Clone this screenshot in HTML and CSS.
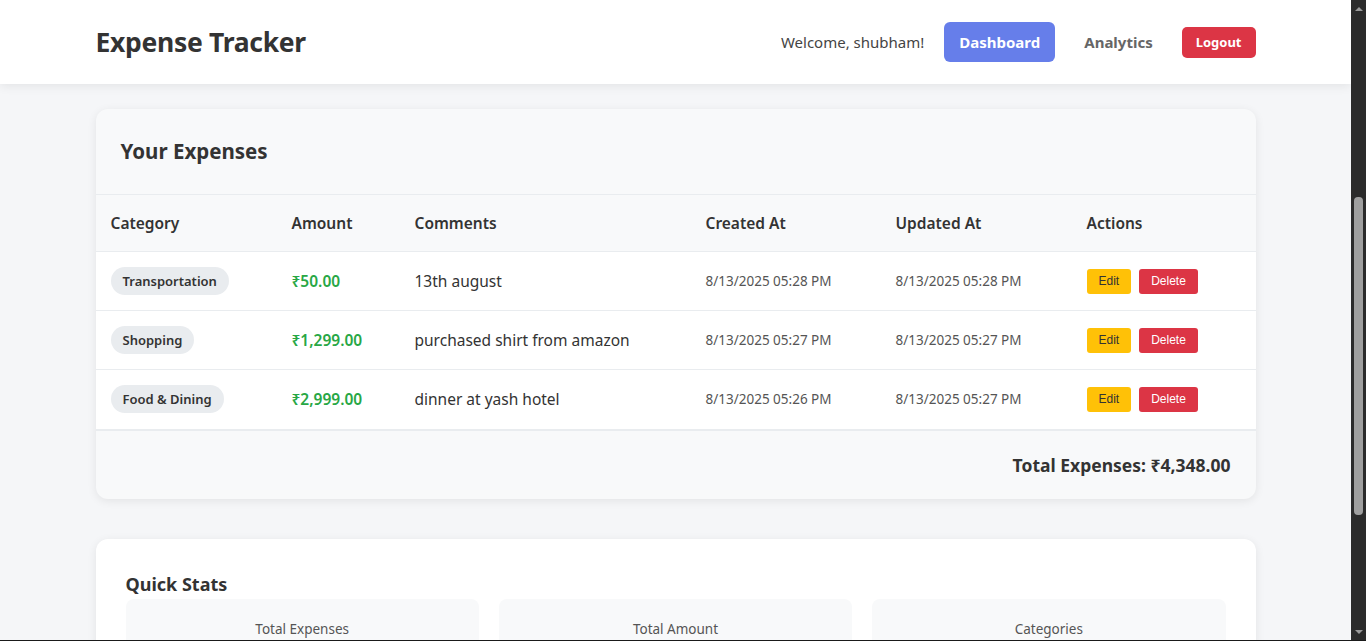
FILE: index.html
```html
<!DOCTYPE html>
<html lang="en">
<head>
<meta charset="utf-8">
<title>Expense Tracker</title>
<link rel="stylesheet" href="styles.css">
</head>
<body>
<div class="screen">
  <div class="viewport">
    <header class="topbar">
      <div class="container nav">
        <h1 class="brand">Expense Tracker</h1>
        <div class="nav-links">
          <span class="welcome">Welcome, shubham!</span>
          <a class="nav-link active">Dashboard</a>
          <a class="nav-link">Analytics</a>
          <button class="logout">Logout</button>
        </div>
      </div>
    </header>
    <main class="container content">
      <section class="card expenses">
        <div class="card-head"><h2>Your Expenses</h2></div>
        <table class="table">
          <thead>
            <tr>
              <th class="c-cat">Category</th>
              <th class="c-amt">Amount</th>
              <th class="c-com">Comments</th>
              <th class="c-cr">Created At</th>
              <th class="c-up">Updated At</th>
              <th class="c-act">Actions</th>
            </tr>
          </thead>
          <tbody>
            <tr>
              <td><span class="badge">Transportation</span></td>
              <td class="amount">₹50.00</td>
              <td class="comment">13th august</td>
              <td class="date">8/13/2025 05:28 PM</td>
              <td class="date">8/13/2025 05:28 PM</td>
              <td><div class="actions"><button class="btn edit">Edit</button><button class="btn del">Delete</button></div></td>
            </tr>
            <tr>
              <td><span class="badge">Shopping</span></td>
              <td class="amount">₹1,299.00</td>
              <td class="comment">purchased shirt from amazon</td>
              <td class="date">8/13/2025 05:27 PM</td>
              <td class="date">8/13/2025 05:27 PM</td>
              <td><div class="actions"><button class="btn edit">Edit</button><button class="btn del">Delete</button></div></td>
            </tr>
            <tr>
              <td><span class="badge">Food &amp; Dining</span></td>
              <td class="amount">₹2,999.00</td>
              <td class="comment">dinner at yash hotel</td>
              <td class="date">8/13/2025 05:26 PM</td>
              <td class="date">8/13/2025 05:27 PM</td>
              <td><div class="actions"><button class="btn edit">Edit</button><button class="btn del">Delete</button></div></td>
            </tr>
          </tbody>
        </table>
        <div class="total">Total Expenses: ₹4,348.00</div>
      </section>
      <section class="card stats">
        <h3>Quick Stats</h3>
        <div class="stat-grid">
          <div class="stat"><div class="stat-label">Total Expenses</div><div class="stat-value">3</div></div>
          <div class="stat"><div class="stat-label">Total Amount</div><div class="stat-value">₹4,348.00</div></div>
          <div class="stat"><div class="stat-label">Categories</div><div class="stat-value">3</div></div>
        </div>
      </section>
    </main>
  </div>
  <div class="scrollbar">
    <div class="arrow up"></div>
    <div class="track"><div class="thumb"></div></div>
    <div class="arrow down"></div>
  </div>
</div>
<div class="taskline"></div>
</body>
</html>
```
FILE: styles.css
```css
* { box-sizing: border-box; }
html, body { margin: 0; padding: 0; height: 641px; overflow: hidden; }
body {
  font-family: "Noto Sans", "Open Sans", sans-serif;
  color: #333;
  background: #f5f6f8;
}
.screen { display: flex; height: 640px; }
.viewport { flex: 1; overflow: hidden; background: #f5f6f8; }
.container { width: 1160px; margin: 0 auto; }

.topbar {
  background: #fff;
  height: 84px;
  box-shadow: 0 2px 10px rgba(0,0,0,0.08);
  position: relative;
}
.nav { display: flex; align-items: center; justify-content: space-between; height: 84px; }
.brand { margin: 0; font-size: 26.5px; font-weight: 700; color: #333; letter-spacing: -0.3px; }
.nav-links { display: flex; align-items: center; }
.welcome { font-size: 15px; color: #444; margin-right: 20px; }
.nav-link {
  font-size: 15px; font-weight: 700; color: #666;
  padding: 9px 14px; border-radius: 6px; line-height: 22px;
}
.nav-link.active { background: #667eea; color: #fff; margin-right: 15px; padding: 9px 15px; }
.logout {
  font-family: inherit; border: 0; background: #dc3545; color: #fff;
  font-size: 13px; font-weight: 700; padding: 6px 14px; line-height: 19px;
  border-radius: 5px; margin-left: 15px;
}

.content { padding-top: 25px; }
.card { border-radius: 12px; box-shadow: 0 2px 10px rgba(0,0,0,0.08); overflow: hidden; }
.expenses { background: #f8f9fa; }
.card-head { padding: 25px 25px; border-bottom: 1px solid #e9ecef; }
.card-head h2 { margin: 0; font-size: 20.5px; font-weight: 700; line-height: 35px; }

.table { width: 100%; border-collapse: collapse; table-layout: fixed; }
.table th {
  text-align: left; font-size: 15.5px; font-weight: 600; color: #333;
  padding: 16px 15px 15px; line-height: 25px; border-bottom: 1px solid #e9ecef; background: #f8f9fa;
}
.c-cat { width: 181px; }
.c-amt { width: 123px; }
.c-com { width: 291px; }
.c-cr { width: 190px; }
.c-up { width: 191px; }
.c-act { width: 184px; }
.table td {
  padding: 15px; height: 59px; background: #fff; border-bottom: 1px solid #e9ecef;
  font-size: 15.5px; line-height: 28px; vertical-align: middle; white-space: nowrap;
}
.table tbody tr:last-child td { border-bottom: 2px solid #e9ecef; height: 60px; }
.badge {
  display: inline-block; vertical-align: top; background: #e9ecef; border-radius: 14px;
  padding: 0 12px; font-size: 13px; font-weight: 600; line-height: 28px; color: #333;
}
.amount { color: #28a745; font-weight: 600; }
.comment { color: #333; }
.table td.date { font-size: 13.5px; color: #555; }
.actions { display: flex; gap: 8px; }
.btn {
  font-family: "Liberation Sans", Arial, sans-serif; font-size: 12px;
  border: 0; border-radius: 3px; padding: 5px 12px; line-height: 15px;
}
.edit { background: #ffc107; color: #333; }
.del { background: #dc3545; color: #fff; }
.total {
  text-align: right; padding: 20px 25px; font-size: 17.5px; font-weight: 700; line-height: 28px;
}

.stats { background: #fff; margin-top: 40px; padding: 30px; }
.stats h3 { margin: 0; font-size: 18px; font-weight: 700; line-height: 30px; }
.stat-grid { display: grid; grid-template-columns: repeat(3, 1fr); gap: 20px; }
.stat { background: #f8f9fa; border-radius: 8px; padding: 20px; text-align: center; }
.stat-label { font-size: 13.5px; color: #555; line-height: 20px; }
.stat-value { font-size: 24px; font-weight: 700; color: #667eea; }

.scrollbar { width: 15px; background: #2b2b2b; display: flex; flex-direction: column; }
.arrow { height: 17px; display: flex; align-items: center; justify-content: center; }
.arrow::before { content: ""; width: 0; height: 0; border-left: 4px solid transparent; border-right: 4px solid transparent; }
.arrow.up::before { border-bottom: 4px solid #9a9a9a; }
.arrow.down::before { border-top: 4px solid #9a9a9a; }
.track { flex: 1; padding-top: 180px; display: flex; justify-content: center; }
.thumb { width: 9px; height: 318px; background: #9f9f9f; border-radius: 4px; }
.taskline { height: 1px; background: #1a1a1a; }
```
